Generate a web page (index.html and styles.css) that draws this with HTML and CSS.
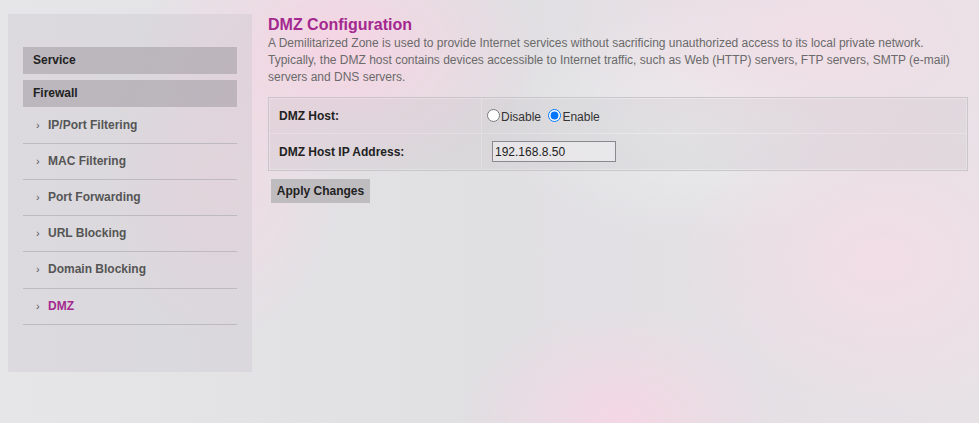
FILE: index.html
```html
<!DOCTYPE html>
<html lang="en">
<head>
  <meta charset="UTF-8" />
  <title>DMZ Configuration</title>
  <link rel="stylesheet" href="styles.css">
</head>
<body>
  <div class="page">
    <div class="sidebar">
      <div class="menu-head">Service</div>
      <div class="menu-head">Firewall</div>
      <ul class="submenu">
        <li><span class="arrow">&rsaquo;</span>IP/Port Filtering</li>
        <li><span class="arrow">&rsaquo;</span>MAC Filtering</li>
        <li><span class="arrow">&rsaquo;</span>Port Forwarding</li>
        <li><span class="arrow">&rsaquo;</span>URL Blocking</li>
        <li><span class="arrow">&rsaquo;</span>Domain Blocking</li>
        <li class="current"><span class="arrow">&rsaquo;</span>DMZ</li>
      </ul>
    </div>

    <div class="content">
      <h1>DMZ Configuration</h1>
      <p class="intro">A Demilitarized Zone is used to provide Internet services without sacrificing unauthorized access to its local private network. Typically, the DMZ host contains devices accessible to Internet traffic, such as Web (HTTP) servers, FTP servers, SMTP (e-mail) servers and DNS servers.</p>

      <table class="form-table">
        <tr>
          <th>DMZ Host:</th>
          <td class="radios">
            <input type="radio" name="dmz" id="dis"><label for="dis">Disable</label>
            <input type="radio" name="dmz" id="en" checked><label for="en">Enable</label>
          </td>
        </tr>
        <tr>
          <th>DMZ Host IP Address:</th>
          <td><input type="text" class="ip" value="192.168.8.50"></td>
        </tr>
      </table>

      <button class="apply-btn">Apply Changes</button>
    </div>
  </div>
</body>
</html>
```

FILE: styles.css
```css
html, body {
  height: 100%;
}
body {
  margin: 0;
  font-family: "Liberation Sans", Arial, sans-serif;
  font-size: 12px;
  color: #222;
  background-color: #e3e2e5;
  background-image:
    radial-gradient(ellipse 200px 130px at 340px 50px, rgba(247, 212, 227, 0.95), rgba(247, 212, 227, 0) 100%),
    radial-gradient(ellipse 160px 110px at 620px 420px, rgba(246, 214, 228, 0.9), rgba(246, 214, 228, 0) 100%),
    radial-gradient(ellipse 200px 160px at 880px 260px, rgba(245, 220, 230, 0.8), rgba(245, 220, 230, 0) 100%),
    radial-gradient(ellipse 260px 140px at 820px 40px, rgba(242, 222, 231, 0.95), rgba(242, 222, 231, 0) 100%),
    radial-gradient(ellipse 120px 160px at 220px 180px, rgba(246, 216, 228, 0.7), rgba(246, 216, 228, 0) 100%),
    radial-gradient(ellipse 200px 120px at 700px 120px, rgba(236, 240, 240, 0.8), rgba(236, 240, 240, 0) 100%),
    linear-gradient(90deg, #e6e5e8 0%, #e0dfe2 50%, #e7e2e6 100%);
}
.page {
  display: flex;
  align-items: flex-start;
  padding: 14px 0 0 8px;
}

/* left menu */
.sidebar {
  width: 214px;
  height: 325px;
  padding: 33px 15px 0 15px;
  background: rgba(200, 198, 204, 0.35);
  flex-shrink: 0;
}
.menu-head {
  height: 27px;
  line-height: 27px;
  padding-left: 10px;
  margin-bottom: 6px;
  background: rgba(170, 165, 172, 0.65);
  font-weight: bold;
  color: #222;
}
.menu-head + .menu-head {
  margin-bottom: 0;
}
.submenu {
  list-style: none;
  margin: 0;
  padding: 0;
}
.submenu li {
  height: 35px;
  line-height: 35px;
  padding-left: 10px;
  border-bottom: 1px solid #bdbbbf;
  font-weight: bold;
  color: #555;
}
.submenu li:first-child {
  height: 36px;
  line-height: 37px;
}
.submenu li:nth-child(5) {
  height: 36px;
}
.submenu li.current {
  color: #a3288f;
}
.arrow {
  display: inline-block;
  width: 15px;
  font-size: 11px;
  color: #555;
  font-weight: normal;
  padding-left: 3px;
  box-sizing: border-box;
}

/* main area */
.content {
  margin-left: 16px;
  width: 701px;
}
h1 {
  margin: 0;
  padding-top: 1px;
  font-size: 16px;
  line-height: 20px;
  color: #a3288f;
}
.intro {
  margin: 0 0 11px 0;
  line-height: 17px;
  color: #6a6a6a;
}
.form-table {
  width: 700px;
  border: 1px solid #c9c6ca;
  border-collapse: separate;
  border-spacing: 1px;
}
.form-table th {
  width: 202px;
  height: 34px;
  padding: 0 0 0 9px;
  text-align: left;
  font-weight: bold;
  background: rgba(190, 186, 192, 0.22);
}
.form-table td {
  padding: 0 0 0 5px;
  background: rgba(190, 186, 192, 0.22);
}
.form-table tr + tr th,
.form-table tr + tr td {
  height: 35px;
}
.radios input {
  margin: 0 1px 0 0;
  vertical-align: -3px;
}
.radios label {
  color: #333;
  margin-right: 4px;
  vertical-align: -2px;
}
.ip {
  margin-left: 5px;
  width: 124px;
  height: 21px;
  box-sizing: border-box;
  padding: 0 2px;
  border: 1px solid #8a8a8e;
  background: rgba(240, 238, 240, 0.6);
  font-family: "Liberation Sans", Arial, sans-serif;
  font-size: 12px;
  color: #222;
}
.apply-btn {
  margin: 8px 0 0 3px;
  width: 99px;
  height: 24px;
  border: none;
  padding: 0;
  background: #bfbcc0;
  font-family: "Liberation Sans", Arial, sans-serif;
  font-size: 12px;
  font-weight: bold;
  color: #222;
}
```
